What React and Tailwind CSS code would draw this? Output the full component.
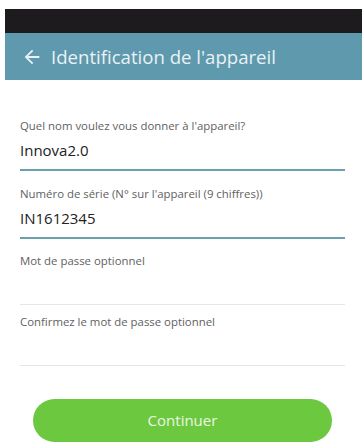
import React from 'react';

const Field = ({ label, value, active, className }) => (
  <div className={className}>
    <div className="h-[15px] text-[11.4px] leading-[15px] text-[#616161]">{label}</div>
    <div className="mt-[6px] h-[22px] text-[15px] leading-[22px] text-[#222]">{value}</div>
    <div className={active ? 'mt-[8px] h-[2px] bg-[#6a9fae]' : 'mt-[8px] h-px bg-[#e6e6e6]'} />
  </div>
);

export default function App() {
  return (
    <div className="w-[362px] h-[448px] bg-white overflow-hidden" style={{ fontFamily: '"Open Sans", "Noto Sans", sans-serif' }}>
      {/* status bar + toolbar */}
      <div className="pt-[9px] pl-[5px]">
        <div className="h-[24px] bg-[#1d1b1e]" />
        <div className="h-[47px] bg-[#5f99ad] flex items-center pl-[16px]">
          <svg width="22" height="22" viewBox="0 0 24 24" fill="#e9f2f5">
            <path d="M20 11H7.83l5.59-5.59L12 4l-8 8 8 8 1.41-1.41L7.83 13H20v-2z" />
          </svg>
          <span className="ml-[8px] text-[18.6px] text-[#e9f2f5]">Identification de l'appareil</span>
        </div>
      </div>

      {/* form */}
      <div className="pl-[20px] pr-[17px]">
        <Field className="mt-[38px]" label="Quel nom voulez vous donner à l'appareil?" value="Innova2.0" active />
        <Field className="mt-[15px]" label="Numéro de série (N° sur l'appareil (9 chiffres))" value="IN1612345" active />
        <Field className="mt-[14px]" label="Mot de passe optionnel" value="" />
        <Field className="mt-[9px]" label="Confirmez le mot de passe optionnel" value="" />
      </div>

      <button className="mt-[33px] ml-[33px] w-[299px] h-[43px] rounded-full bg-[#6cc83f] text-[15px] text-[#eaf7e2]">
        Continuer
      </button>
    </div>
  );
}
